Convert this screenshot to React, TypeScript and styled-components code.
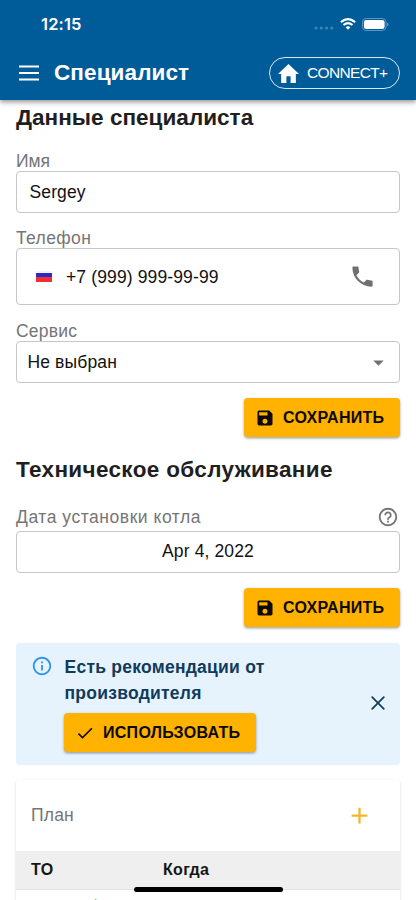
import React from "react";
import styled, { createGlobalStyle } from "styled-components";
import {
  MdPhone, MdSave, MdArrowDropDown, MdHelpOutline, MdInfoOutline, MdCheck, MdAdd,
} from "react-icons/md";

const Global = createGlobalStyle`
  * { box-sizing: border-box; }
  body { margin: 0; background: #fff; overflow: hidden; font-family: "Liberation Sans", Arial, sans-serif; }
  button { font-family: inherit; border: 0; padding: 0; background: none; color: inherit; }
  h1, h2, p { margin: 0; }
  svg { display: block; flex: none; }
`;

const Screen = styled.div`
  width: 416px;
  height: 900px;
  overflow: hidden;
  position: relative;
  white-space: nowrap;
`;

const Header = styled.header`
  height: 100px;
  background: #005b99;
  color: #fff;
  box-shadow: 0 2px 4px rgba(0, 0, 0, 0.28), 0 3px 6px rgba(0, 0, 0, 0.14);
`;

const StatusBar = styled.div`
  height: 46px;
  padding: 2px 27px 0 41px;
  display: flex;
  align-items: center;
`;

const Clock = styled.span`
  flex: 1;
  font: 600 16.5px Inter, sans-serif;
  letter-spacing: 0.15px;
`;

const StatusIcons = styled.div`
  display: flex;
  align-items: center;
  gap: 6px;
`;

const AppBar = styled.div`
  height: 54px;
  padding: 0 16px 0 19px;
  display: flex;
  align-items: center;
`;

const PageTitle = styled.h1`
  flex: 1;
  margin-left: 15px;
  font-size: 22.5px;
  font-weight: 700;
  line-height: 30px;
  letter-spacing: 0.1px;
`;

const ConnectButton = styled.button`
  width: 131px;
  height: 32px;
  padding-left: 8px;
  border: 1px solid #d8e8f4;
  border-radius: 16px;
  display: flex;
  align-items: center;
  gap: 8px;
  font-size: 15.5px;
  letter-spacing: -0.65px;
`;

const Content = styled.main`
  padding: 0 16px;
`;

const SectionTitle = styled.h2<{ $top?: number; $spacing: number }>`
  height: 36px;
  margin-top: ${(p) => p.$top ?? 0}px;
  line-height: 36px;
  font-size: 22.5px;
  letter-spacing: ${(p) => p.$spacing}px;
  color: #1f1f1f;
`;

const Label = styled.div<{ $top?: number; $gap?: number; $spacing?: number }>`
  height: 20px;
  margin: ${(p) => p.$top ?? 15}px 0 ${(p) => p.$gap ?? 0}px;
  padding-right: 1px;
  display: flex;
  align-items: center;
  justify-content: space-between;
  font-size: 17.5px;
  line-height: 20px;
  letter-spacing: ${(p) => p.$spacing ?? -0.1}px;
  color: #757575;
`;

const Field = styled.div<{ $height?: number; $left?: number; $center?: boolean }>`
  height: ${(p) => p.$height ?? 42}px;
  padding-left: ${(p) => p.$left ?? 12.5}px;
  border: 1px solid #c6c6c6;
  border-radius: 4px;
  display: flex;
  align-items: center;
  justify-content: ${(p) => (p.$center ? "center" : "flex-start")};
  font-size: 17.5px;
  color: #111;
`;

const Value = styled.span<{ $grow?: boolean; $top?: number; $bottom?: number }>`
  flex: ${(p) => (p.$grow ? 1 : "none")};
  padding-top: ${(p) => p.$top ?? 0}px;
  padding-bottom: ${(p) => p.$bottom ?? 0}px;
  letter-spacing: 0.13px;
`;

const Flag = styled.span`
  width: 16px;
  height: 11px;
  margin-right: 14px;
  background: linear-gradient(#f4f4f8 0 2px, #2b2bc4 2px 6px, #f02f35 6px);
`;

const EndIcon = styled.span<{ $right: number }>`
  margin-right: ${(p) => p.$right}px;
  color: #707070;
`;

const ActionButton = styled.button<{ $width: number; $gap: number }>`
  width: ${(p) => p.$width}px;
  height: 39px;
  padding-left: 11px;
  border-radius: 4px;
  background: #ffb200;
  color: #0d0a05;
  display: flex;
  align-items: center;
  gap: ${(p) => p.$gap}px;
  font-size: 16px;
  font-weight: 700;
  letter-spacing: 0.28px;
  box-shadow: 0 1px 3px rgba(0, 0, 0, 0.3), 0 2px 2px rgba(0, 0, 0, 0.1);
`;

const Actions = styled.div`
  height: 40px;
  margin-top: 15px;
  display: flex;
  justify-content: flex-end;
`;

const Alert = styled.section`
  height: 122px;
  margin-top: 15px;
  padding: 11px 15px 13px 15px;
  border-radius: 4px;
  background: #e6f3fd;
  display: flex;
  color: #2f96e8;
`;

const AlertIcon = styled.div`
  width: 33px;
  padding-top: 1px;
`;

const AlertBody = styled.div`
  flex: 1;
`;

const AlertText = styled.p`
  height: 59px;
  padding-left: 0.5px;
  font-size: 17.5px;
  font-weight: 700;
  line-height: 26px;
  letter-spacing: 0.25px;
  color: #113a5b;
`;

const CloseButton = styled.button`
  align-self: center;
  color: #113a5b;
`;

const PlanCard = styled.section`
  height: 160px;
  margin-top: 15px;
  border-radius: 4px;
  box-shadow: 0 1px 3px rgba(0, 0, 0, 0.16);
`;

const PlanHeader = styled.div`
  height: 71px;
  padding: 0 27px 0 15px;
  display: flex;
  align-items: center;
  justify-content: space-between;
  font-size: 17.5px;
  letter-spacing: 0.2px;
  color: #757575;
`;

const TableRow = styled.div<{ $head?: boolean }>`
  height: 39px;
  padding-left: 15px;
  border-bottom: 1px solid #e2e2e2;
  background: ${(p) => (p.$head ? "#efefef" : "transparent")};
  display: grid;
  grid-template-columns: 132px 1fr;
  align-items: center;
  font-size: 16px;
  font-weight: ${(p) => (p.$head ? 700 : 400)};
  letter-spacing: 0.3px;
  color: #161616;
`;

const RowName = styled.span`
  padding: 0 0 4px 58px;
`;

const HomeIndicator = styled.div`
  position: absolute;
  left: 134px;
  bottom: 8px;
  width: 149px;
  height: 5px;
  border-radius: 3px;
  background: #000;
`;

const SaveAction = () => (
  <Actions>
    <ActionButton $width={156} $gap={8}>
      <MdSave size={20} />
      СОХРАНИТЬ
    </ActionButton>
  </Actions>
);

export default function App() {
  return (
    <Screen>
      <Global />
      <Header>
        <StatusBar>
          <Clock>12:15</Clock>
          <StatusIcons>
            <svg width="20" height="12" viewBox="0 0 20 12" fill="#3f83b4">
              <circle cx="2" cy="10" r="1.6" />
              <circle cx="7.3" cy="10" r="1.6" />
              <circle cx="12.6" cy="10" r="1.6" />
              <circle cx="17.9" cy="10" r="1.6" />
            </svg>
            <svg width="16" height="12" viewBox="0 0 16 12" fill="none" stroke="#fff" strokeWidth="2.2">
              <path d="M.9 4.2Q8-1.8 15.1 4.2" />
              <path d="M3.5 7Q8 3.4 12.5 7" />
              <path d="M5.6 9.2Q8 7.4 10.4 9.2L8 11.8Z" fill="#fff" stroke="none" />
            </svg>
            <svg width="27" height="13" viewBox="0 0 27 13" fill="none">
              <rect x=".5" y=".5" width="23.5" height="12" rx="3.6" stroke="#5d97c1" />
              <rect x="1.9" y="1.9" width="20.7" height="9.2" rx="2.3" fill="#fff" />
              <path d="M25.2 4.5Q27.6 6.5 25.2 8.5Z" fill="#7fadce" />
            </svg>
          </StatusIcons>
        </StatusBar>
        <AppBar>
          <svg width="20" height="16" viewBox="0 0 20 16" stroke="#fff" strokeWidth="2">
            <path d="M0 1.5H20M0 8H20M0 14.5H20" />
          </svg>
          <PageTitle>Специалист</PageTitle>
          <ConnectButton>
            <svg width="21" height="19" viewBox="2 3 20 17" preserveAspectRatio="none" fill="#fff">
              <path d="M10 20v-6h4v6h5v-8h3L12 3 2 12h3v8z" />
            </svg>
            CONNECT+
          </ConnectButton>
        </AppBar>
      </Header>
      <Content>
        <SectionTitle $spacing={0.03}>Данные специалиста</SectionTitle>
        <Label>Имя</Label>
        <Field><Value>Sergey</Value></Field>
        <Label $spacing={0.38}>Телефон</Label>
        <Field $height={57} $left={19}>
          <Flag />
          <Value $grow $top={2}>+7 (999) 999-99-99</Value>
          <EndIcon $right={23}><MdPhone size={27} /></EndIcon>
        </Field>
        <Label $top={16} $spacing={0.2}>Сервис</Label>
        <Field $left={10.5}>
          <Value $grow>Не выбран</Value>
          <EndIcon $right={8}><MdArrowDropDown size={25} /></EndIcon>
        </Field>
        <SaveAction />
        <SectionTitle $top={14} $spacing={0.35}>Техническое обслуживание</SectionTitle>
        <Label $top={19} $gap={4} $spacing={0.54}>
          Дата установки котла
          <MdHelpOutline size={22} />
        </Label>
        <Field $center $left={0}><Value $bottom={2}>Apr 4, 2022</Value></Field>
        <SaveAction />
        <Alert>
          <AlertIcon><MdInfoOutline size={22} /></AlertIcon>
          <AlertBody>
            <AlertText>Есть рекомендации от<br />производителя</AlertText>
            <ActionButton $width={192} $gap={8}>
              <MdCheck size={20} />
              ИСПОЛЬЗОВАТЬ
            </ActionButton>
          </AlertBody>
          <CloseButton aria-label="Закрыть">
            <svg width="14" height="14" viewBox="0 0 14 14" stroke="currentColor" strokeWidth="1.7" strokeLinecap="round">
              <path d="M1.2 1.2L12.8 12.8M12.8 1.2L1.2 12.8" />
            </svg>
          </CloseButton>
        </Alert>
        <PlanCard>
          <PlanHeader>
            План
            <MdAdd size={27} color="#f5b52b" />
          </PlanHeader>
          <TableRow $head>
            <span>ТО</span>
            <span>Когда</span>
          </TableRow>
          <TableRow><RowName>ф</RowName></TableRow>
        </PlanCard>
      </Content>
      <HomeIndicator />
    </Screen>
  );
}
